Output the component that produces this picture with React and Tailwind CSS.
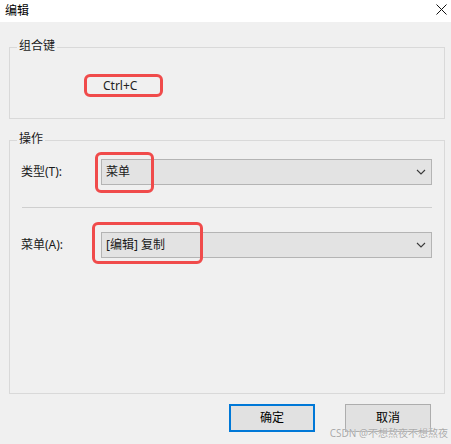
import React from "react";

const Chevron = () => (
  <svg width="10" height="6" viewBox="0 0 10 6" className="mr-[5px]">
    <path d="M1 1 L5 5 L9 1" fill="none" stroke="#3a3a3a" strokeWidth="1.1" />
  </svg>
);

const Combo = ({ value }) => (
  <div className="flex-1 h-[26px] flex items-center justify-between bg-[#e3e3e3] border border-[#b4b4b4] pl-[4px]">
    <span>{value}</span>
    <Chevron />
  </div>
);

const App = () => {
  return (
    <div className="relative w-[451px] h-[444px] flex flex-col bg-[#f0f0f0] text-[12px] leading-[16px] text-[#1a1a1a] font-['Noto_Sans','Noto_Sans_CJK_SC',sans-serif] overflow-hidden">
      {/* Title bar */}
      <div className="h-[22px] bg-white flex items-center justify-between pl-[5px] pr-[4px]">
        <span className="text-black">编辑</span>
        <svg width="11" height="11" viewBox="0 0 11 11" className="-mt-[4px]">
          <path d="M0.5 0.5 L10.5 10.5 M10.5 0.5 L0.5 10.5" stroke="#111" strokeWidth="1" />
        </svg>
      </div>

      {/* Body */}
      <div className="flex-1 flex flex-col pl-[9px] pr-[6px]">
        {/* 组合键 group */}
        <div className="relative mt-[25px] h-[72px] border border-[#d9d9d9]">
          <span className="absolute left-[7px] -top-[10px] px-[2px] bg-[#f0f0f0]">组合键</span>
          <div className="ml-[74px] mt-[26px] w-[79px] h-[23px] border-[3px] border-[#f04b4b] rounded-[6px] flex items-center pl-[16px] text-[#222]">
            Ctrl+C
          </div>
        </div>

        {/* 操作 group */}
        <div className="relative mt-[21px] h-[254px] border border-[#d9d9d9] pl-[11px] pr-[12px]">
          <span className="absolute left-[7px] -top-[10px] px-[2px] bg-[#f0f0f0]">操作</span>

          <div className="mt-[18px] flex items-center">
            <span className="w-[80px]">类型(T):</span>
            <Combo value="菜单" />
          </div>

          <div className="mt-[22px] ml-[1px] border-t border-[#cfcfcf]" />

          <div className="mt-[24px] flex items-center">
            <span className="w-[80px]">菜单(A):</span>
            <Combo value="[编辑] 复制" />
          </div>

          {/* annotation boxes */}
          <div className="absolute left-[85px] top-[11px] w-[59px] h-[41px] border-[3px] border-[#f04b4b] rounded-[6px]" />
          <div className="absolute left-[82px] top-[81px] w-[111px] h-[42px] border-[3px] border-[#f04b4b] rounded-[6px]" />
        </div>

        {/* Buttons */}
        <div className="mt-[10px] flex justify-end gap-[30px] pr-[14px]">
          <button className="w-[86px] h-[28px] bg-[#e1e1e1] border-2 border-[#0078d7] text-black">确定</button>
          <button className="w-[86px] h-[28px] bg-[#e1e1e1] border border-[#adadad] text-black">取消</button>
        </div>
      </div>

      {/* Watermark */}
      <span className="absolute right-[3px] bottom-[4px] text-[10px] leading-[13px] text-[#a9a9a9] [text-shadow:0_0_1px_#fff]">
        CSDN @不想熬夜不想熬夜
      </span>
    </div>
  );
};

export default App;
